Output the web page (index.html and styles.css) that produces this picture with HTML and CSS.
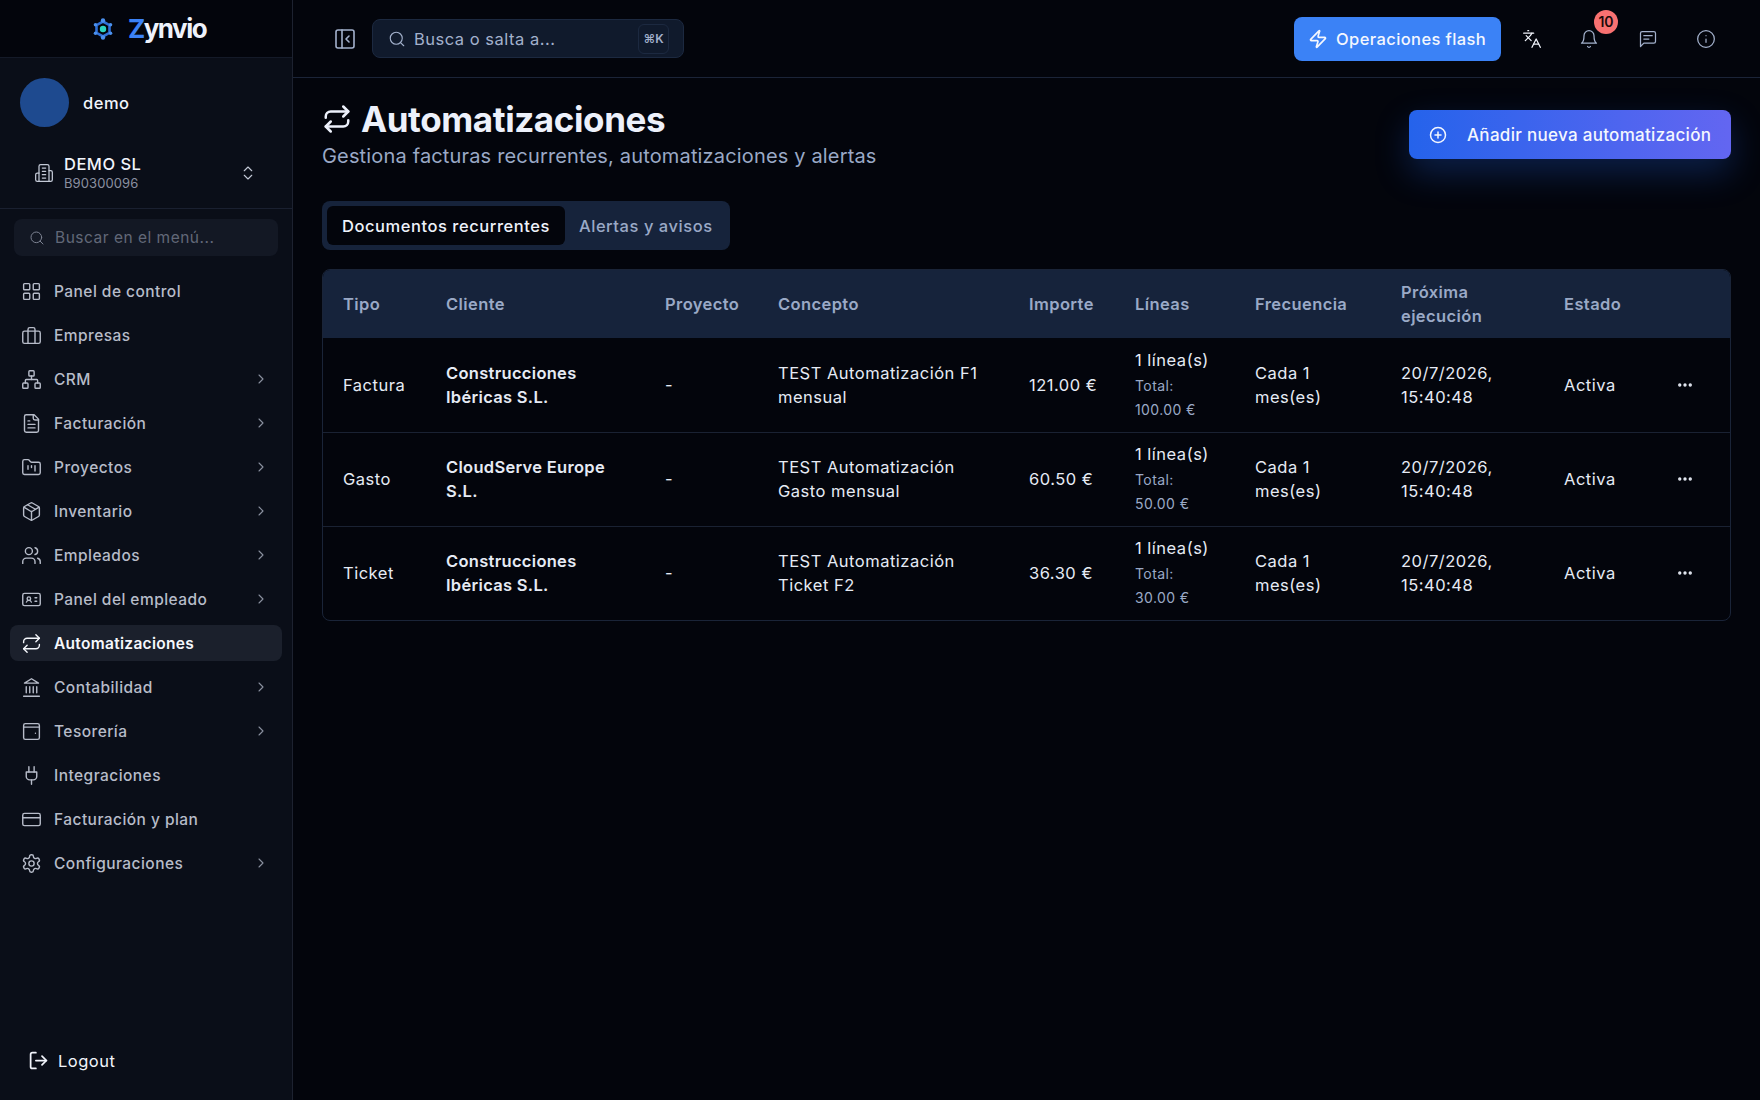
FILE: index.html
```html
<!DOCTYPE html>
<html lang="es">
<head>
    <meta charset="UTF-8">
    <title>Automatizaciones - Zynvio</title>
    <link rel="stylesheet" href="styles.css">
</head>
<body>
    <svg class="icon-defs" width="0" height="0">
        <symbol id="i-grid" viewBox="0 0 24 24"><rect x="3" y="3" width="7" height="7" rx="1"/><rect x="14" y="3" width="7" height="7" rx="1"/><rect x="14" y="14" width="7" height="7" rx="1"/><rect x="3" y="14" width="7" height="7" rx="1"/></symbol>
        <symbol id="i-briefcase" viewBox="0 0 24 24"><rect x="2" y="7" width="20" height="14" rx="2"/><path d="M16 21V5a2 2 0 0 0-2-2h-4a2 2 0 0 0-2 2v16"/></symbol>
        <symbol id="i-network" viewBox="0 0 24 24"><rect x="16" y="16" width="6" height="6" rx="1"/><rect x="2" y="16" width="6" height="6" rx="1"/><rect x="9" y="2" width="6" height="6" rx="1"/><path d="M5 16v-3a1 1 0 0 1 1-1h12a1 1 0 0 1 1 1v3"/><path d="M12 12V8"/></symbol>
        <symbol id="i-file" viewBox="0 0 24 24"><path d="M15 2H6a2 2 0 0 0-2 2v16a2 2 0 0 0 2 2h12a2 2 0 0 0 2-2V7Z"/><path d="M14 2v4a2 2 0 0 0 2 2h4"/><path d="M10 9H8"/><path d="M16 13H8"/><path d="M16 17H8"/></symbol>
        <symbol id="i-folder" viewBox="0 0 24 24"><path d="M4 20h16a2 2 0 0 0 2-2V8a2 2 0 0 0-2-2h-7.93a2 2 0 0 1-1.66-.9l-.82-1.2A2 2 0 0 0 7.93 3H4a2 2 0 0 0-2 2v13c0 1.1.9 2 2 2Z"/><path d="M8 10v4"/><path d="M12 10v2"/><path d="M16 10v6"/></symbol>
        <symbol id="i-package" viewBox="0 0 24 24"><path d="M11 21.73a2 2 0 0 0 2 0l7-4A2 2 0 0 0 21 16V8a2 2 0 0 0-1-1.73l-7-4a2 2 0 0 0-2 0l-7 4A2 2 0 0 0 3 8v8a2 2 0 0 0 1 1.73z"/><path d="M12 22V12"/><path d="m3.3 7 7.7 4.73a2 2 0 0 0 2 0L20.7 7"/><path d="m7.5 4.27 9 5.15"/></symbol>
        <symbol id="i-users" viewBox="0 0 24 24"><path d="M16 21v-2a4 4 0 0 0-4-4H6a4 4 0 0 0-4 4v2"/><circle cx="9" cy="7" r="4"/><path d="M22 21v-2a4 4 0 0 0-3-3.87"/><path d="M16 3.13a4 4 0 0 1 0 7.75"/></symbol>
        <symbol id="i-idcard" viewBox="0 0 24 24"><path d="M16 10h2"/><path d="M16 14h2"/><path d="M6.17 15a3 3 0 0 1 5.66 0"/><circle cx="9" cy="11" r="2"/><rect x="2" y="5" width="20" height="14" rx="2"/></symbol>
        <symbol id="i-repeat" viewBox="0 0 24 24"><path d="m17 2 4 4-4 4"/><path d="M3 11v-1a4 4 0 0 1 4-4h14"/><path d="m7 22-4-4 4-4"/><path d="M21 13v1a4 4 0 0 1-4 4H3"/></symbol>
        <symbol id="i-landmark" viewBox="0 0 24 24"><path d="M3 22h18"/><path d="M6 18v-7"/><path d="M10 18v-7"/><path d="M14 18v-7"/><path d="M18 18v-7"/><path d="M12 2l8 5H4z"/></symbol>
        <symbol id="i-wallet" viewBox="0 0 24 24"><rect x="3" y="3" width="18" height="18" rx="2"/><path d="M3 7h18"/><path d="M16.500 14h.01"/></symbol>
        <symbol id="i-plug" viewBox="0 0 24 24"><path d="M12 22v-5"/><path d="M9 8V2"/><path d="M15 8V2"/><path d="M18 8v5a4 4 0 0 1-4 4h-4a4 4 0 0 1-4-4V8Z"/></symbol>
        <symbol id="i-card" viewBox="0 0 24 24"><rect x="2" y="5" width="20" height="14" rx="2"/><path d="M2 10h20"/></symbol>
        <symbol id="i-gear" viewBox="0 0 24 24"><path d="M12.22 2h-.44a2 2 0 0 0-2 2v.18a2 2 0 0 1-1 1.73l-.43.25a2 2 0 0 1-2 0l-.15-.08a2 2 0 0 0-2.73.73l-.22.38a2 2 0 0 0 .73 2.73l.15.1a2 2 0 0 1 1 1.72v.51a2 2 0 0 1-1 1.74l-.15.09a2 2 0 0 0-.73 2.73l.22.38a2 2 0 0 0 2.73.73l.15-.08a2 2 0 0 1 2 0l.43.25a2 2 0 0 1 1 1.73V20a2 2 0 0 0 2 2h.44a2 2 0 0 0 2-2v-.18a2 2 0 0 1 1-1.73l.43-.25a2 2 0 0 1 2 0l.15.08a2 2 0 0 0 2.73-.73l.22-.39a2 2 0 0 0-.73-2.73l-.15-.08a2 2 0 0 1-1-1.74v-.5a2 2 0 0 1 1-1.74l.15-.09a2 2 0 0 0 .73-2.73l-.22-.38a2 2 0 0 0-2.73-.73l-.15.08a2 2 0 0 1-2 0l-.43-.25a2 2 0 0 1-1-1.73V4a2 2 0 0 0-2-2z"/><circle cx="12" cy="12" r="3"/></symbol>
        <symbol id="i-chevron" viewBox="0 0 24 24"><path d="m9 18 6-6-6-6"/></symbol>
        <symbol id="i-updown" viewBox="0 0 24 24"><path d="m7 15 5 5 5-5"/><path d="m7 9 5-5 5 5"/></symbol>
        <symbol id="i-search" viewBox="0 0 24 24"><circle cx="11" cy="11" r="8"/><path d="m21 21-4.3-4.3"/></symbol>
        <symbol id="i-building" viewBox="0 0 24 24"><path d="M6 22V4a2 2 0 0 1 2-2h8a2 2 0 0 1 2 2v18Z"/><path d="M6 12H4a2 2 0 0 0-2 2v6a2 2 0 0 0 2 2h2"/><path d="M18 9h2a2 2 0 0 1 2 2v9a2 2 0 0 1-2 2h-2"/><path d="M10 6h4"/><path d="M10 10h4"/><path d="M10 14h4"/><path d="M10 18h4"/></symbol>
        <symbol id="i-panel" viewBox="0 0 24 24"><rect x="3" y="3" width="18" height="18" rx="2"/><path d="M9 3v18"/><path d="m16 15-3-3 3-3"/></symbol>
        <symbol id="i-zap" viewBox="0 0 24 24"><path d="M4 14a1 1 0 0 1-.78-1.63l9.9-10.2a.5.5 0 0 1 .86.46l-1.92 6.02A1 1 0 0 0 13 10h7a1 1 0 0 1 .78 1.63l-9.9 10.2a.5.5 0 0 1-.86-.46l1.92-6.02A1 1 0 0 0 11 14z"/></symbol>
        <symbol id="i-lang" viewBox="0 0 24 24"><path d="m5 8 6 6"/><path d="m4 14 6-6 2-3"/><path d="M2 5h12"/><path d="M7 2h1"/><path d="m22 22-5-10-5 10"/><path d="M14 18h6"/></symbol>
        <symbol id="i-bell" viewBox="0 0 24 24"><path d="M6 8a6 6 0 0 1 12 0c0 7 3 9 3 9H3s3-2 3-9"/><path d="M10.3 21a1.94 1.94 0 0 0 3.4 0"/></symbol>
        <symbol id="i-chat" viewBox="0 0 24 24"><path d="M21 15a2 2 0 0 1-2 2H7l-4 4V5a2 2 0 0 1 2-2h14a2 2 0 0 1 2 2z"/><path d="M17 8H7"/><path d="M13 12H7"/></symbol>
        <symbol id="i-info" viewBox="0 0 24 24"><circle cx="12" cy="12" r="10"/><path d="M12 16v-4"/><path d="M12 8h.01"/></symbol>
        <symbol id="i-plus" viewBox="0 0 24 24"><circle cx="12" cy="12" r="10"/><path d="M8 12h8"/><path d="M12 8v8"/></symbol>
        <symbol id="i-dots" viewBox="0 0 24 24"><circle cx="12" cy="12" r="1"/><circle cx="19" cy="12" r="1"/><circle cx="5" cy="12" r="1"/></symbol>
        <symbol id="i-logout" viewBox="0 0 24 24"><path d="M9 21H5a2 2 0 0 1-2-2V5a2 2 0 0 1 2-2h4"/><path d="m16 17 5-5-5-5"/><path d="M21 12H9"/></symbol>
    </svg>

    <div class="layout">
        <aside class="sidebar">
            <div class="brand">
                <svg class="brand-mark" viewBox="0 0 24 24">
                    <path d="M12 4.500 18.500 8.200v7.600L12 19.500 5.500 15.800V8.200Z" fill="none" stroke="#2f6fd6" stroke-width="2.600"/>
                    <circle cx="12" cy="12" r="3.200" fill="#2dd4bf"/>
                    <circle cx="12" cy="3.500" r="2.200" fill="#4a90ee"/>
                    <circle cx="12" cy="20.500" r="2.200" fill="#4a90ee"/>
                    <circle cx="4.500" cy="7.800" r="1.800" fill="#4a90ee"/>
                    <circle cx="19.500" cy="7.800" r="1.800" fill="#4a90ee"/>
                    <circle cx="4.500" cy="16.200" r="1.800" fill="#4a90ee"/>
                    <circle cx="19.500" cy="16.200" r="1.800" fill="#4a90ee"/>
                </svg>
                <span class="brand-name"><span class="brand-z">Z</span>ynvio</span>
            </div>

            <div class="account">
                <div class="profile">
                    <div class="avatar"></div>
                    <span class="profile-name">demo</span>
                </div>
                <div class="company">
                    <svg class="icon company-icon"><use href="#i-building"/></svg>
                    <div class="company-text">
                        <div class="company-name">DEMO SL</div>
                        <div class="company-id">B90300096</div>
                    </div>
                    <svg class="icon company-switch"><use href="#i-updown"/></svg>
                </div>
            </div>

            <div class="menu-search">
                <svg class="icon"><use href="#i-search"/></svg>
                <span>Buscar en el menú...</span>
            </div>

            <nav class="menu">
                <a class="menu-item"><svg class="icon"><use href="#i-grid"/></svg><span>Panel de control</span></a>
                <a class="menu-item"><svg class="icon"><use href="#i-briefcase"/></svg><span>Empresas</span></a>
                <a class="menu-item"><svg class="icon"><use href="#i-network"/></svg><span>CRM</span><svg class="icon chevron"><use href="#i-chevron"/></svg></a>
                <a class="menu-item"><svg class="icon"><use href="#i-file"/></svg><span>Facturación</span><svg class="icon chevron"><use href="#i-chevron"/></svg></a>
                <a class="menu-item"><svg class="icon"><use href="#i-folder"/></svg><span>Proyectos</span><svg class="icon chevron"><use href="#i-chevron"/></svg></a>
                <a class="menu-item"><svg class="icon"><use href="#i-package"/></svg><span>Inventario</span><svg class="icon chevron"><use href="#i-chevron"/></svg></a>
                <a class="menu-item"><svg class="icon"><use href="#i-users"/></svg><span>Empleados</span><svg class="icon chevron"><use href="#i-chevron"/></svg></a>
                <a class="menu-item"><svg class="icon"><use href="#i-idcard"/></svg><span>Panel del empleado</span><svg class="icon chevron"><use href="#i-chevron"/></svg></a>
                <a class="menu-item active"><svg class="icon"><use href="#i-repeat"/></svg><span>Automatizaciones</span></a>
                <a class="menu-item"><svg class="icon"><use href="#i-landmark"/></svg><span>Contabilidad</span><svg class="icon chevron"><use href="#i-chevron"/></svg></a>
                <a class="menu-item"><svg class="icon"><use href="#i-wallet"/></svg><span>Tesorería</span><svg class="icon chevron"><use href="#i-chevron"/></svg></a>
                <a class="menu-item"><svg class="icon"><use href="#i-plug"/></svg><span>Integraciones</span></a>
                <a class="menu-item"><svg class="icon"><use href="#i-card"/></svg><span>Facturación y plan</span></a>
                <a class="menu-item"><svg class="icon"><use href="#i-gear"/></svg><span>Configuraciones</span><svg class="icon chevron"><use href="#i-chevron"/></svg></a>
            </nav>

            <a class="logout"><svg class="icon"><use href="#i-logout"/></svg><span>Logout</span></a>
        </aside>

        <div class="content">
            <header class="topbar">
                <svg class="icon toggle"><use href="#i-panel"/></svg>
                <div class="quick-search">
                    <svg class="icon"><use href="#i-search"/></svg>
                    <span>Busca o salta a...</span>
                    <kbd>⌘K</kbd>
                </div>
                <div class="topbar-right">
                    <button class="flash-btn"><svg class="icon"><use href="#i-zap"/></svg>Operaciones flash</button>
                    <div class="top-icons">
                        <svg class="icon lang"><use href="#i-lang"/></svg>
                        <div class="bell">
                            <svg class="icon"><use href="#i-bell"/></svg>
                            <span class="badge">10</span>
                        </div>
                        <svg class="icon"><use href="#i-chat"/></svg>
                        <svg class="icon"><use href="#i-info"/></svg>
                    </div>
                </div>
            </header>

            <main class="page">
                <div class="page-head">
                    <div>
                        <h1><svg class="icon"><use href="#i-repeat"/></svg>Automatizaciones</h1>
                        <p class="subtitle">Gestiona facturas recurrentes, automatizaciones y alertas</p>
                    </div>
                    <button class="add-btn"><svg class="icon"><use href="#i-plus"/></svg>Añadir nueva automatización</button>
                </div>

                <div class="tabs">
                    <button class="tab active">Documentos recurrentes</button>
                    <button class="tab">Alertas y avisos</button>
                </div>

                <div class="table-wrap">
                    <table>
                        <colgroup>
                            <col class="c-tipo"><col class="c-cliente"><col class="c-proyecto"><col class="c-concepto"><col class="c-importe">
                            <col class="c-lineas"><col class="c-frec"><col class="c-prox"><col class="c-estado"><col>
                        </colgroup>
                        <thead>
                            <tr>
                                <th>Tipo</th><th>Cliente</th><th>Proyecto</th><th>Concepto</th><th>Importe</th>
                                <th>Líneas</th><th>Frecuencia</th><th>Próxima ejecución</th><th>Estado</th><th></th>
                            </tr>
                        </thead>
                        <tbody>
                            <tr>
                                <td>Factura</td>
                                <td class="client">Construcciones Ibéricas S.L.</td>
                                <td>-</td>
                                <td>TEST Automatización F1 mensual</td>
                                <td>121.00&nbsp;€</td>
                                <td>1 línea(s)<div class="line-total">Total: 100.00&nbsp;€</div></td>
                                <td>Cada 1 mes(es)</td>
                                <td>20/7/2026, 15:40:48</td>
                                <td>Activa</td>
                                <td><svg class="icon dots"><use href="#i-dots"/></svg></td>
                            </tr>
                            <tr>
                                <td>Gasto</td>
                                <td class="client">CloudServe Europe S.L.</td>
                                <td>-</td>
                                <td>TEST Automatización Gasto mensual</td>
                                <td>60.50&nbsp;€</td>
                                <td>1 línea(s)<div class="line-total">Total: 50.00&nbsp;€</div></td>
                                <td>Cada 1 mes(es)</td>
                                <td>20/7/2026, 15:40:48</td>
                                <td>Activa</td>
                                <td><svg class="icon dots"><use href="#i-dots"/></svg></td>
                            </tr>
                            <tr>
                                <td>Ticket</td>
                                <td class="client">Construcciones Ibéricas S.L.</td>
                                <td>-</td>
                                <td>TEST Automatización Ticket F2</td>
                                <td>36.30&nbsp;€</td>
                                <td>1 línea(s)<div class="line-total">Total: 30.00&nbsp;€</div></td>
                                <td>Cada 1 mes(es)</td>
                                <td>20/7/2026, 15:40:48</td>
                                <td>Activa</td>
                                <td><svg class="icon dots"><use href="#i-dots"/></svg></td>
                            </tr>
                        </tbody>
                    </table>
                </div>
            </main>
        </div>
    </div>
</body>
</html>
```

FILE: styles.css
```css
* {
    box-sizing: border-box;
}

body {
    margin: 0;
    font-family: 'Inter', 'Noto Sans', sans-serif;
    font-size: 16.5px;
    letter-spacing: 0.5px;
    background: #03050c;
    color: #e6ebf5;
}

button {
    font-family: inherit;
    letter-spacing: inherit;
    border: none;
}

.icon-defs {
    position: absolute;
}

.icon {
    width: 18px;
    height: 18px;
    flex-shrink: 0;
    fill: none;
    stroke: currentColor;
    stroke-width: 2;
    stroke-linecap: round;
    stroke-linejoin: round;
}

.layout {
    display: flex;
    height: 1100px;
}

/* sidebar */
.sidebar {
    width: 293px;
    flex-shrink: 0;
    display: flex;
    flex-direction: column;
    background: #0a0e18;
    border-right: 1px solid #1d2230;
}

.brand {
    height: 58px;
    display: flex;
    align-items: center;
    justify-content: center;
    gap: 13px;
    padding-left: 5px;
    background: #03050c;
    border-bottom: 1px solid #141a28;
}

.brand-mark {
    width: 24px;
    height: 24px;
}

.brand-name {
    font-size: 26px;
    font-weight: 700;
    letter-spacing: -1.5px;
    color: #eef2fb;
}

.brand-z {
    color: #3b82f6;
}

.account {
    height: 151px;
    padding: 20px 20px 0;
    border-bottom: 1px solid #1a2030;
}

.profile {
    display: flex;
    align-items: center;
    gap: 14px;
}

.avatar {
    width: 49px;
    height: 49px;
    border-radius: 50%;
    background: #1e4a8f;
}

.profile-name {
    font-weight: 500;
    color: #f1f4fb;
}

.company {
    display: flex;
    align-items: center;
    margin-top: 27px;
    padding-left: 14px;
}

.company-icon {
    width: 20px;
    height: 20px;
    color: #c3c9d6;
    stroke-width: 1.5;
}

.company-text {
    margin-left: 10px;
    flex: 1;
}

.company-name {
    line-height: 20px;
    font-weight: 500;
    color: #f1f4fb;
}

.company-id {
    margin-top: 1px;
    font-size: 13px;
    line-height: 17px;
    letter-spacing: 0.1px;
    color: #8a90a0;
}

.company-switch {
    margin-right: 15px;
    color: #c3c9d6;
    stroke-width: 1.5;
}

.menu-search {
    margin: 10px 14px 0;
    height: 37px;
    display: flex;
    align-items: center;
    gap: 10px;
    padding-left: 15px;
    background: #131824;
    border-radius: 8px;
    font-size: 15.5px;
    color: #626878;
}

.menu-search .icon {
    width: 16px;
    height: 16px;
    stroke-width: 1.5;
    color: #7c8292;
}

.menu {
    margin-top: 17px;
    padding: 0 10px;
    display: flex;
    flex-direction: column;
    gap: 8px;
}

.menu-item {
    height: 36px;
    display: flex;
    align-items: center;
    gap: 12px;
    padding: 0 13px 0 11px;
    border-radius: 8px;
    font-size: 15.5px;
    letter-spacing: 0.45px;
    font-weight: 500;
    color: #b7bcc9;
}

.menu-item .icon {
    width: 21px;
    height: 21px;
    stroke-width: 1.6;
}

.menu-item .chevron {
    margin-left: auto;
    width: 16px;
    height: 16px;
    color: #8b91a0;
}

.menu-item.active {
    background: #1b202c;
    color: #f5f7fc;
    font-weight: 600;
    letter-spacing: 0.3px;
}

.logout {
    margin-top: auto;
    margin-bottom: 29px;
    margin-left: 28px;
    display: flex;
    align-items: center;
    gap: 9px;
    color: #f1f4fb;
}

.logout .icon {
    width: 21px;
    height: 21px;
}

/* top bar */
.content {
    flex: 1;
    min-width: 0;
}

.topbar {
    height: 78px;
    display: flex;
    align-items: center;
    padding: 0 44px 0 40px;
    border-bottom: 1px solid #1b2438;
}

.toggle {
    width: 24px;
    height: 24px;
    color: #a3b1cc;
    stroke-width: 1.6;
}

.quick-search {
    margin-left: 15px;
    width: 312px;
    height: 39px;
    display: flex;
    align-items: center;
    gap: 8px;
    padding: 0 14px 0 15px;
    background: #101a2c;
    border: 1px solid #1c2940;
    border-radius: 8px;
    color: #a3b1cc;
}

.quick-search .icon {
    stroke-width: 1.5;
}

.quick-search kbd {
    margin-left: auto;
    width: 31px;
    height: 30px;
    display: flex;
    align-items: center;
    justify-content: center;
    font-family: inherit;
    font-size: 12px;
    font-weight: 600;
    letter-spacing: 0;
    border: 1px solid #1c2940;
    border-radius: 6px;
    color: #a3b1cc;
}

.topbar-right {
    margin-left: auto;
    display: flex;
    align-items: center;
}

.flash-btn {
    width: 207px;
    height: 44px;
    display: flex;
    align-items: center;
    gap: 8px;
    padding-left: 14px;
    background: #3b82f6;
    border-radius: 8px;
    color: #f4f7fe;
    font-size: 16.5px;
    letter-spacing: 0.4px;
    font-weight: 500;
}

.flash-btn .icon {
    width: 20px;
    height: 20px;
}

.top-icons {
    display: flex;
    align-items: center;
    gap: 38px;
    margin-left: 21px;
    color: #a3b1cc;
}

.top-icons .icon {
    width: 20px;
    height: 20px;
    stroke-width: 1.5;
}

.top-icons .lang {
    color: #f1f4fb;
}

.bell {
    position: relative;
    display: flex;
    left: -1px;
}

.badge {
    position: absolute;
    top: -19px;
    left: 15px;
    width: 24px;
    height: 24px;
    display: flex;
    align-items: center;
    justify-content: center;
    border-radius: 50%;
    background: #f87171;
    color: #1b0a0a;
    font-size: 14px;
    letter-spacing: 0;
    font-weight: 600;
}

/* page */
.page {
    padding: 18px 29px 0 29px;
}

.page-head {
    display: flex;
    justify-content: space-between;
    align-items: flex-start;
}

h1 {
    margin: 0;
    display: flex;
    align-items: center;
    gap: 9px;
    font-size: 35px;
    line-height: 46px;
    letter-spacing: -0.4px;
    font-weight: 700;
    color: #edf1fb;
}

h1 .icon {
    width: 30px;
    height: 30px;
    stroke-width: 2;
}

.subtitle {
    margin: 0;
    font-size: 20px;
    line-height: 28px;
    letter-spacing: 0.16px;
    color: #9aa9c6;
}

.add-btn {
    margin-top: 14px;
    width: 322px;
    height: 49px;
    display: flex;
    align-items: center;
    gap: 20px;
    padding-left: 20px;
    background: linear-gradient(to right, #2563eb, #6366f1);
    border-radius: 8px;
    color: #f4f7fe;
    font-size: 17px;
    letter-spacing: 0.3px;
    font-weight: 500;
    box-shadow: 0 14px 34px rgba(37, 99, 235, 0.28);
}

.tabs {
    margin-top: 31px;
    width: 408px;
    height: 49px;
    display: flex;
    align-items: center;
    padding: 0 5px;
    background: #16233b;
    border-radius: 8px;
}

.tab {
    height: 39px;
    padding: 0 14px;
    flex-shrink: 0;
    white-space: nowrap;
    border-radius: 6px;
    background: transparent;
    font-size: 16.5px;
    letter-spacing: 0.55px;
    font-weight: 500;
    color: #9aa9c6;
}

.tab.active {
    background: #03050c;
    color: #eef2fb;
    padding: 0 15px;
}

.table-wrap {
    margin-top: 19px;
    border: 1px solid #1a2438;
    border-radius: 8px;
    overflow: hidden;
}

table {
    width: 100%;
    border-collapse: collapse;
    table-layout: fixed;
}

.c-tipo { width: 103px; }
.c-cliente { width: 219px; }
.c-proyecto { width: 113px; }
.c-concepto { width: 251px; }
.c-importe { width: 106px; }
.c-lineas { width: 120px; }
.c-frec { width: 146px; }
.c-prox { width: 163px; }
.c-estado { width: 116px; }

th {
    height: 68px;
    padding: 0 20px;
    background: #16233b;
    text-align: left;
    line-height: 24px;
    letter-spacing: 0.4px;
    font-weight: 600;
    color: #9aa9c6;
}

td {
    height: 94px;
    padding: 0 20px;
    line-height: 24px;
    color: #e6ebf5;
    border-top: 1px solid #1a2233;
}

tbody tr:first-child td {
    border-top: none;
}

td:last-child {
    padding: 0 0 0 16px;
}

td.client {
    font-weight: 600;
    letter-spacing: 0.3px;
}

.line-total {
    margin-top: 2px;
    font-size: 14px;
    letter-spacing: 0.4px;
    color: #9aa9c6;
}

.dots {
    display: block;
    color: #e6ebf5;
    stroke-width: 2.500;
}
```
